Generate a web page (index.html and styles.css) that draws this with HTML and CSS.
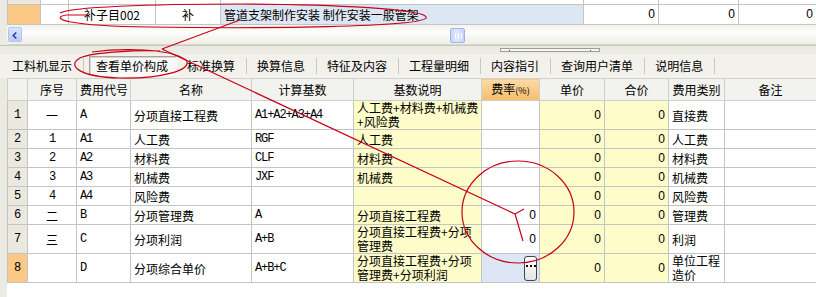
FILE: index.html
```html
<!DOCTYPE html>
<html lang="zh-CN">
<head>
    <meta charset="UTF-8">
    <title>查看单价构成</title>
    <link rel="stylesheet" href="styles.css">
</head>
<body>
<div class="page">

    <!-- 上方清单表格（只露出一行半） -->
    <div class="top-panel">
        <table class="top-grid">
            <colgroup>
                <col style="width:33px"><col style="width:28px"><col style="width:87px"><col style="width:65px">
                <col style="width:363px"><col style="width:75px"><col style="width:80px"><col style="width:78px">
            </colgroup>
            <tr class="row-cut">
                <td class="rh"></td><td></td><td></td><td></td><td></td><td></td><td></td><td></td>
            </tr>
            <tr class="row-cur">
                <td class="rh cur"></td>
                <td></td>
                <td class="c">补子目002</td>
                <td class="c">补</td>
                <td class="sel">管道支架制作安装 制作安装一般管架</td>
                <td class="n">0</td>
                <td class="n">0</td>
                <td class="n">0</td>
            </tr>
        </table>
        <div class="hscroll">
            <span class="sb-btn">
                <svg width="14" height="15" viewBox="0 0 14 15"><path d="M8.5 4 L5 7.5 L8.5 11" fill="none" stroke="#26389a" stroke-width="1.8"/></svg>
            </span>
            <span class="sb-track"><span class="sb-thumb"></span></span>
        </div>
    </div>

    <div class="splitter"><span class="grip"><i></i><i></i></span></div>

    <!-- 页签 -->
    <div class="tabs">
        <span class="tab">工料机显示</span>
        <span class="tab active">查看单价构成</span>
        <span class="tab">标准换算</span>
        <span class="tab">换算信息</span>
        <span class="tab">特征及内容</span>
        <span class="tab">工程量明细</span>
        <span class="tab">内容指引</span>
        <span class="tab">查询用户清单</span>
        <span class="tab">说明信息</span>
    </div>

    <!-- 单价构成表 -->
    <div class="lower-panel">
        <table class="grid">
            <colgroup>
                <col style="width:20px"><col style="width:49px"><col style="width:54px"><col style="width:121px">
                <col style="width:102px"><col style="width:128px"><col style="width:58px"><col style="width:65px">
                <col style="width:64px"><col style="width:56px"><col style="width:92px">
            </colgroup>
            <tr class="head">
                <th></th>
                <th>序号</th>
                <th>费用代号</th>
                <th>名称</th>
                <th>计算基数</th>
                <th>基数说明</th>
                <th class="hot">费率<small>(%)</small></th>
                <th>单价</th>
                <th>合价</th>
                <th>费用类别</th>
                <th>备注</th>
            </tr>
            <tr class="tall">
                <td class="rh">1</td><td class="c">一</td><td class="code">A</td><td>分项直接工程费</td><td class="code">A1+A2+A3+A4</td>
                <td class="yel top wrap">人工费+材料费+机械费<br>+风险费</td><td class="n"></td><td class="yel n">0</td><td class="yel n">0</td><td>直接费</td><td></td>
            </tr>
            <tr>
                <td class="rh">2</td><td class="c mono">1</td><td class="code">A1</td><td>人工费</td><td class="code">RGF</td>
                <td class="yel">人工费</td><td class="n"></td><td class="yel n">0</td><td class="yel n">0</td><td>人工费</td><td></td>
            </tr>
            <tr>
                <td class="rh">3</td><td class="c mono">2</td><td class="code">A2</td><td>材料费</td><td class="code">CLF</td>
                <td class="yel">材料费</td><td class="n"></td><td class="yel n">0</td><td class="yel n">0</td><td>材料费</td><td></td>
            </tr>
            <tr>
                <td class="rh">4</td><td class="c mono">3</td><td class="code">A3</td><td>机械费</td><td class="code">JXF</td>
                <td class="yel">机械费</td><td class="n"></td><td class="yel n">0</td><td class="yel n">0</td><td>机械费</td><td></td>
            </tr>
            <tr>
                <td class="rh">5</td><td class="c mono">4</td><td class="code">A4</td><td>风险费</td><td class="code"></td>
                <td class="yel"></td><td class="n"></td><td class="yel n">0</td><td class="yel n">0</td><td>风险费</td><td></td>
            </tr>
            <tr>
                <td class="rh">6</td><td class="c">二</td><td class="code">B</td><td>分项管理费</td><td class="code">A</td>
                <td class="yel">分项直接工程费</td><td class="n">0</td><td class="yel n">0</td><td class="yel n">0</td><td>管理费</td><td></td>
            </tr>
            <tr class="tall7">
                <td class="rh">7</td><td class="c">三</td><td class="code">C</td><td>分项利润</td><td class="code">A+B</td>
                <td class="yel wrap">分项直接工程费+分项<br>管理费</td><td class="n">0</td><td class="yel n">0</td><td class="yel n">0</td><td>利润</td><td></td>
            </tr>
            <tr class="tall8">
                <td class="rh cur">8</td><td class="c"></td><td class="code">D</td><td>分项综合单价</td><td class="code">A+B+C</td>
                <td class="yel wrap">分项直接工程费+分项<br>管理费+分项利润</td>
                <td class="n picked"><span class="dots"><i></i><i></i><i></i></span></td>
                <td class="yel n">0</td><td class="yel n">0</td><td class="wrap">单位工程<br>造价</td><td></td>
            </tr>
        </table>
    </div>

    <!-- 红色手绘标注 -->
    <svg class="marks" width="816" height="297" viewBox="0 0 816 297">
        <g fill="none" stroke="#c8001a" stroke-width="1.2">
            <path d="M88 15 L66 15 C 50 18, 64 26, 150 27 C 260 29, 420 27, 426 18 C 430 9, 330 4, 240 4 C 150 4, 70 7, 60 13"/>
            <path d="M240 20 L162 49"/>
            <path d="M92 52 C 120 48, 170 48, 186 60 C 194 70, 160 79, 120 78 C 80 77, 66 66, 80 58 C 92 52, 140 50, 160 51"/>
            <path d="M162 49 L515 214"/>
            <ellipse cx="518" cy="212" rx="56" ry="51"/>
            <path d="M524 209 L515 214 L523 241"/>
        </g>
    </svg>
</div>
</body>
</html>
```

FILE: styles.css
```css
body {
    margin: 0;
    background: #ecebe3;
    font-family: "Noto Sans CJK SC", "Liberation Sans", sans-serif;
    font-size: 12px;
    color: #000;
}

.page {
    position: relative;
    width: 816px;
    height: 297px;
    overflow: hidden;
    display: flex;
    flex-direction: column;
}

table {
    border-collapse: collapse;
    table-layout: fixed;
}

td, th {
    border: 1px solid #c4c4c4;
    padding: 0 3px;
    white-space: nowrap;
    overflow: hidden;
    line-height: 13px;
}

/* 上方表格 */
.top-panel {
    margin-left: 7px;
    background: #fff;
}

.top-grid {
    width: 809px;
}

.top-grid .row-cut td {
    height: 4px;
    border-top: none;
}

.top-grid .row-cur td {
    height: 19px;
}

.top-grid .rh {
    background: #ebe9df;
}

.top-grid .rh.cur,
.grid .rh.cur {
    background: #fbc985;
}

.top-grid .sel {
    background: #dde6f3;
    white-space: pre;
}

.c {
    text-align: center;
}

.n {
    text-align: right;
    font-family: "Liberation Sans", sans-serif;
    font-size: 12px;
}

/* 横向滚动条 */
.hscroll {
    height: 19px;
    display: flex;
    align-items: center;
    background: linear-gradient(#f4f3ee, #fdfdfb 40%, #efeee7);
    border-bottom: 1px solid #d8d7cf;
}

.sb-btn {
    width: 14px;
    height: 15px;
    margin-left: 1px;
    border: 1px solid #b5c6ee;
    border-radius: 2px;
    background: linear-gradient(#dbe5fd, #b9cbf7);
    box-sizing: border-box;
    display: flex;
}

.sb-track {
    flex: 1;
    height: 15px;
    position: relative;
}

.sb-thumb {
    position: absolute;
    left: 428px;
    top: 1px;
    width: 15px;
    height: 15px;
    border: 1px solid #9eb4ec;
    border-radius: 2px;
    box-sizing: border-box;
    background: linear-gradient(90deg, #c9d7fb, #dfe8fe 50%, #c4d3fa);
}

.sb-thumb::after {
    content: "";
    position: absolute;
    left: 4px;
    top: 4px;
    width: 5px;
    height: 6px;
    border-left: 1px solid #fff;
    border-right: 1px solid #fff;
    background: linear-gradient(90deg, transparent 2px, #fff 2px, #fff 3px, transparent 3px);
}

/* 分隔条 */
.splitter {
    height: 8px;
    position: relative;
    border-top: 1px solid #c9c8c0;
}

.splitter .grip {
    position: absolute;
    left: 500px;
    top: 2px;
    width: 100px;
    height: 4px;
    border: 1px solid #9d9c96;
    box-sizing: border-box;
    background: #f6f5f0;
}

.splitter .grip i {
    position: absolute;
    top: 1px;
    width: 1px;
    height: 1px;
    background: #555;
}

.splitter .grip i:first-child { left: 8px; }
.splitter .grip i:last-child { right: 8px; }

/* 页签 */
.tabs {
    height: 24px;
    display: flex;
    align-items: center;
    padding-left: 2px;
    background: #f2f1ec;
    font-size: 12px;
}

.tab {
    padding: 0 11px 0 10px;
    line-height: 16px;
    border-right: 1px solid #c9c8c0;
}

.tab.active {
    padding: 1px 8px 1px 6px;
    margin-left: 5px;
    background: #f8f8f6;
    border: 1px solid #a6a49c;
    border-right-color: #fff;
    border-bottom-color: #fff;
    box-shadow: inset 1px 1px 0 #d6d4cc;
}

/* 单价构成表 */
.lower-panel {
    flex: 1;
    margin-left: 7px;
    background: #fff;
}

.grid {
    width: 809px;
}

.grid th {
    height: 21px;
    font-weight: normal;
    background: #f2f2ee;
    border-color: #cfcfcb;
}

.grid th.hot {
    background: linear-gradient(#fcdba6, #f6bd6a);
}

.grid th small {
    font-size: 9px;
}

.grid td {
    height: 18px;
}

.grid .tall td {
    height: 28px;
}

.grid .tall7 td {
    height: 27px;
}

.grid .tall8 td {
    height: 28px;
}

.grid .rh {
    padding: 0;
    text-align: center;
    background: #ebe9df;
    font-family: "Liberation Mono", monospace;
    font-size: 12px;
}

.code,
.mono {
    font-family: "Liberation Mono", monospace;
    font-size: 12px;
    letter-spacing: -1.1px;
}

.yel {
    background: #fefdc9;
}

.wrap {
    line-height: 14px;
}

.top {
    vertical-align: top;
    padding-top: 0;
}

.picked {
    background: #dce6f4;
    padding: 0 2px;
}

.dots {
    display: inline-flex;
    justify-content: center;
    gap: 2px;
    padding-top: 8px;
    width: 13px;
    height: 25px;
    border: 1px solid #444;
    border-radius: 3px;
    box-sizing: border-box;
    background: linear-gradient(#fff, #e4e4e4);
    vertical-align: middle;
}

.dots i {
    width: 2px;
    height: 2px;
    background: #000;
}

/* 标注层 */
.marks {
    position: absolute;
    left: 0;
    top: 0;
    pointer-events: none;
}
```
